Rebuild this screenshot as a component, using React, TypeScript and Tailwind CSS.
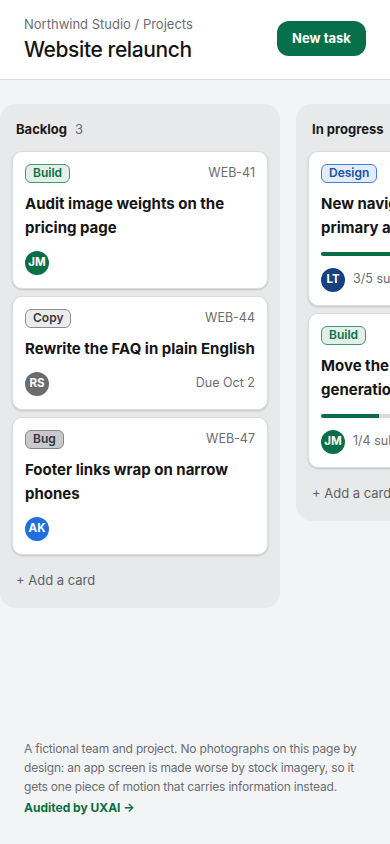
import React from "react";

type Tag = "Build" | "Copy" | "Bug" | "Design";

const tagCls: Record<Tag, string> = {
  Build: "bg-[#e2f0e8] border-[#3d9970] text-[#0a6e47]",
  Copy: "bg-[#ececed] border-[#8d8d90] text-[#3a3a3c]",
  Bug: "bg-[#c9c9cc] border-[#87878a] text-[#333335]",
  Design: "bg-[#e2ecfb] border-[#3d7fe0] text-[#1d4fa3]",
};

type Card = {
  tag: Tag;
  id?: string;
  title: string;
  avatar: string;
  avatarCls: string;
  due?: string;
  progress?: [number, number];
};

function TaskCard({ c }: { c: Card }) {
  return (
    <div className="bg-white rounded-[10px] border border-[#dcdde0] shadow-[0_1px_2px_rgba(0,0,0,0.18)] px-3 pt-3 pb-[13px]">
      <div className="flex items-center justify-between">
        <span
          className={`inline-flex items-center h-[19px] px-[7px] rounded-md border text-[12px] font-semibold leading-none ${tagCls[c.tag]}`}
        >
          {c.tag}
        </span>
        {c.id && <span className="text-[12.5px] text-[#6b6d72]">{c.id}</span>}
      </div>
      <div className="mt-[9px] text-[15px] font-bold leading-6 text-[#151515] whitespace-nowrap overflow-hidden">
        {c.title.split("\n").map((l, i) => (
          <div key={i}>{l}</div>
        ))}
      </div>
      {c.progress && (
        <div className="mt-3 h-1 rounded-full bg-[#d9dadd] overflow-hidden">
          <div
            className="h-full bg-[#0a6e47]"
            style={{ width: `${(c.progress[0] / c.progress[1]) * 100}%` }}
          />
        </div>
      )}
      <div className={`${c.progress ? "mt-3" : "mt-[11px]"} flex items-center justify-between`}>
        <div className="flex items-center gap-2 whitespace-nowrap">
          <span
            className={`w-6 h-6 rounded-full flex items-center justify-center text-white text-[11.5px] font-bold ${c.avatarCls}`}
          >
            {c.avatar}
          </span>
          {c.progress && (
            <span className="text-[12.5px] text-[#6b6d72]">
              {c.progress[0]}/{c.progress[1]} subtasks
            </span>
          )}
        </div>
        {c.due && <span className="text-[12.5px] text-[#6b6d72]">{c.due}</span>}
      </div>
    </div>
  );
}

function Column({ name, count, cards }: { name: string; count: number; cards: Card[] }) {
  return (
    <div className="w-[280px] shrink-0 bg-[#e8e9eb] rounded-2xl px-3 pt-[16px] pb-[18px]">
      <div className="px-1 flex items-baseline gap-2">
        <span className="text-[13px] font-bold text-[#1a1a1a]">{name}</span>
        <span className="text-[13px] text-[#6b6d72]">{count}</span>
      </div>
      <div className="mt-[11px] flex flex-col gap-[7px]">
        {cards.map((c, i) => (
          <TaskCard key={i} c={c} />
        ))}
      </div>
      <div className="mt-[16px] px-1 text-[13px] text-[#5f6166]">+ Add a card</div>
    </div>
  );
}

export default function App() {
  const backlog: Card[] = [
    {
      tag: "Build",
      id: "WEB-41",
      title: "Audit image weights on the\npricing page",
      avatar: "JM",
      avatarCls: "bg-[#0a6e47]",
    },
    {
      tag: "Copy",
      id: "WEB-44",
      title: "Rewrite the FAQ in plain English",
      avatar: "RS",
      avatarCls: "bg-[#6b6b70]",
      due: "Due Oct 2",
    },
    {
      tag: "Bug",
      id: "WEB-47",
      title: "Footer links wrap on narrow\nphones",
      avatar: "AK",
      avatarCls: "bg-[#1f6fdf]",
    },
  ];
  const progress: Card[] = [
    {
      tag: "Design",
      id: "WEB-38",
      title: "New navigation with the\nprimary actions first",
      avatar: "LT",
      avatarCls: "bg-[#183f80]",
      progress: [3, 5],
    },
    {
      tag: "Build",
      id: "WEB-39",
      title: "Move the image\ngeneration to build time",
      avatar: "JM",
      avatarCls: "bg-[#0a6e47]",
      progress: [1, 4],
    },
  ];
  return (
    <div
      className="min-h-screen flex flex-col bg-[#f3f4f6] overflow-hidden"
      style={{ fontFamily: "Inter, 'Noto Sans', sans-serif" }}
    >
      <header className="bg-white border-b border-[#dcdde0] h-[80px] px-6 flex items-center justify-between">
        <div className="pt-[1px]">
          <div className="text-[13px] text-[#6b6d72] leading-4">Northwind Studio / Projects</div>
          <div className="mt-[4px] text-[21px] font-medium text-[#151515] leading-7 tracking-[-0.4px]">
            Website relaunch
          </div>
        </div>
        <button className="h-[35px] w-[89px] mt-[-2px] rounded-xl bg-[#07704a] text-white text-[13px] font-bold">
          New task
        </button>
      </header>
      <div className="mt-6 flex items-start gap-4 overflow-hidden">
        <Column name="Backlog" count={3} cards={backlog} />
        <Column name="In progress" count={2} cards={progress} />
      </div>
      <div className="flex-1" />
      <footer className="px-6 pb-[27px]">
        <p className="text-[12px] leading-[19px] text-[#6b6d72] tracking-[-0.2px]">
          A fictional team and project. No photographs on this page by design: an app screen is made worse by stock
          imagery, so it gets one piece of motion that carries information instead.
        </p>
        <div className="mt-[2px] text-[12px] font-bold text-[#0a6e47] leading-[19px]">Audited by UXAI →</div>
      </footer>
    </div>
  );
}
